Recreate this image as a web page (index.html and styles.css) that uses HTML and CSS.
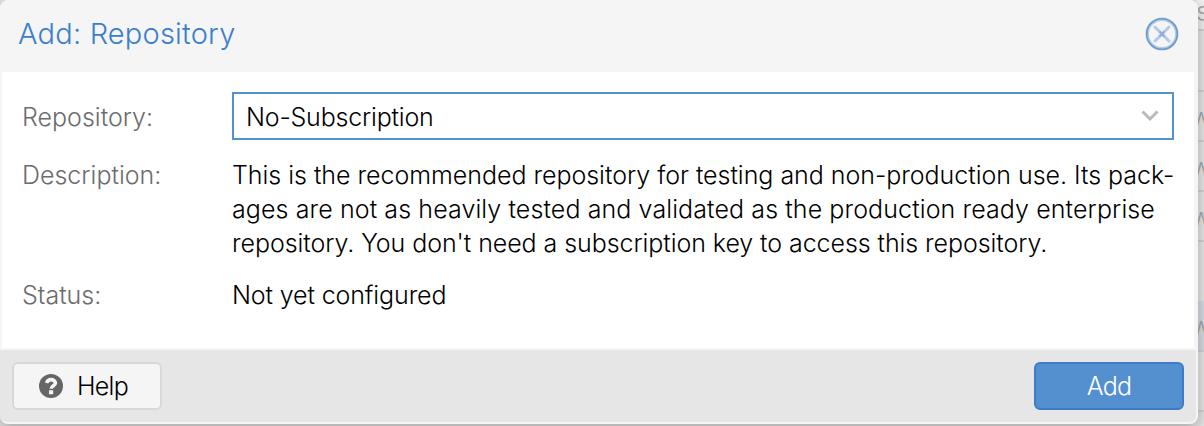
FILE: index.html
```
<!DOCTYPE html>
<html lang="en">
<head>
<meta charset="utf-8">
<title>Add: Repository</title>
<link rel="stylesheet" href="styles.css">
</head>
<body>
<div class="backdrop">
  <div class="grid-row row-a">s</div>
  <div class="grid-row row-b"></div>
  <div class="grid-row row-c">w</div>
  <div class="grid-row row-d">w</div>
  <div class="grid-row row-d">w</div>
  <div class="grid-row row-e"></div>
  <div class="grid-row row-f">w</div>
  <div class="grid-row row-g"></div>
</div>
<div class="window">
  <div class="header">
    <h1 class="title">Add: Repository</h1>
    <svg class="close" width="34" height="34" viewBox="0 0 34 34" fill="none">
      <circle cx="17" cy="17" r="14.800" stroke="#b3cbe6" stroke-width="3.400"/>
      <circle cx="17" cy="17" r="15.300" stroke="#6c9aca" stroke-width="1.600"/>
      <path d="M10 10L24 24M24 10L10 24" stroke="#b4c9ea" stroke-width="3" stroke-linecap="round"/>
      <path d="M14.500 14.500L19.500 19.500M19.500 14.500L14.500 19.500" stroke="#8eaee0" stroke-width="2"/>
    </svg>
  </div>
  <div class="body">
    <div class="field">
      <label class="label">Repository:</label>
      <div class="combo">
        <span class="t-combo">No-Subscription</span>
        <svg width="18" height="12" viewBox="0 0 18 12" fill="none"><path d="M1.500 1.500L9 9L16.500 1.500" stroke="#b9b9b9" stroke-width="3"/></svg>
      </div>
    </div>
    <div class="field">
      <div class="label">Description:</div>
      <div class="value"><span class="line-1">This is the recommended repository for testing and non-production use. Its pack-</span><br><span class="line-2">ages are not as heavily tested and validated as the production ready enterprise</span><br><span class="line-3">repository. You don't need a subscription key to access this repository.</span></div>
    </div>
    <div class="field">
      <div class="label">Status:</div>
      <div class="value"><span class="t-status">Not yet configured</span></div>
    </div>
  </div>
  <div class="footer">
    <button class="btn help">
      <svg width="24" height="24" viewBox="0 0 24 24"><circle cx="12" cy="12" r="12" fill="#666"/><path d="M7.600 9C8.300 6.900 9.900 5.600 12 5.600C14.500 5.600 16.400 7 16.400 9.100C16.400 11.800 12.200 11.600 12.200 14.800" fill="none" stroke="#f5f5f5" stroke-width="3.600"/><path d="M10 16.200h4.200v4h-4.200z" fill="#f5f5f5"/></svg>
      <span class="t-help">Help</span>
    </button>
    <button class="btn add"><span class="t-add">Add</span></button>
  </div>
</div>
</body>
</html>
```
FILE: styles.css
```
* { box-sizing: border-box; }
body {
  margin: 0;
  width: 1204px;
  height: 426px;
  overflow: hidden;
  position: relative;
  background: #e4e4e4;
  font-family: Inter, "Liberation Sans", sans-serif;
  font-weight: 300;
  font-size: 25px;
}
.backdrop { margin-left: 1196px; width: 8px; overflow: hidden; }
.grid-row {
  height: 50px;
  border-bottom: 2px solid #d4d4d4;
  background: #e8e8e8;
  color: #a8a8a8;
  line-height: 50px;
  text-indent: -5px;
  overflow: hidden;
}
.row-a { height: 31px; line-height: 22px; text-indent: 0; background: #f2f2f2; }
.row-b { height: 61px; }
.row-e { height: 59px; border-bottom: 0; }
.row-f { height: 51px; background: #d6dde3; }
.row-g { height: 60px; }
.window {
  position: absolute;
  left: 0;
  top: 0;
  width: 1198px;
  height: 424px;
  display: flex;
  flex-direction: column;
  border: 2px solid #f5f5f5;
  border-top: 0;
  border-left-width: 0;
  border-radius: 8px;
  background: #e6e6e6;
  overflow: hidden;
  box-shadow: 0 4px 16px rgba(0, 0, 0, .3);
}
.header {
  height: 72px;
  display: flex;
  justify-content: space-between;
  padding: 17px 17px 0 18px;
  background: #f5f5f5;
}
.title { margin: 0; font-size: 29px; line-height: 34px; font-weight: 300; color: #3a7fcc; letter-spacing: .2px; }
.body {
  height: 278px;
  padding: 20px 20px 0;
  background: #fff;
  border: solid #f5f5f5;
  border-width: 0 2px 2px;
  display: flex;
  flex-direction: column;
  gap: 18px;
}
.field { display: flex; line-height: 34px; white-space: nowrap; }
.label { flex: none; width: 210px; color: #6c6c6c; }
.value { color: #000; }
.combo {
  width: 942px;
  height: 48px;
  border: 2px solid #5391d0;
  padding: 2px 13px 0 12px;
  display: flex;
  align-items: center;
  justify-content: space-between;
}
.combo svg { margin-bottom: 2px; }
.field:first-child { line-height: 50px; height: 48px; }
.t-combo { letter-spacing: -.2px; }
.line-1 { letter-spacing: -.03px; }
.line-2 { letter-spacing: .1px; }
.line-3 { letter-spacing: -.07px; }
.t-status { letter-spacing: -.12px; }
.t-help, .t-add { letter-spacing: -.7px; }
.footer { flex: 1; display: flex; justify-content: space-between; align-items: flex-start; padding: 12px 12px 0; }
.btn {
  width: 150px;
  height: 48px;
  display: flex;
  align-items: center;
  justify-content: center;
  padding: 0;
  border: 2px solid #d8d8d8;
  border-radius: 6px;
  background: #f5f5f5;
  font: inherit;
  color: #000;
}
.help { justify-content: flex-start; padding-left: 25px; gap: 14px; }
.add { background: #5490d0; border-color: #3b7dca; color: #fff; }
```
